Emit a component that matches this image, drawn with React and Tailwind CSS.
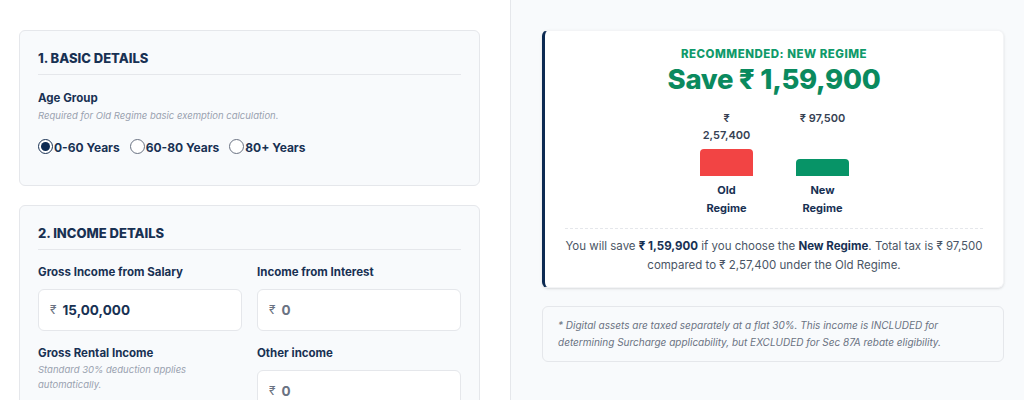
import React from 'react';

const navy = 'text-[#183153]';

function Radio({ label, checked }) {
    return (
        <label className="flex items-center gap-[1px]">
            <span className={`w-[15px] h-[15px] rounded-full border flex items-center justify-center bg-white ${checked ? 'border-[#183153] border-[1.5px]' : 'border-gray-500'}`}>
                {checked && <span className="w-[9px] h-[9px] rounded-full bg-[#0c2a52]" />}
            </span>
            <span className={`text-[12px] font-bold ${navy} mt-[3px]`}>{label}</span>
        </label>
    );
}

function Field({ label, help, value, muted }) {
    return (
        <div className="flex flex-col">
            <div className={`text-[11.5px] font-bold ${navy} leading-[16px]`}>{label}</div>
            {help && <div className="text-[9.5px] italic text-gray-400 leading-[15px] mt-[1px] pr-[40px]">{help}</div>}
            <div className="mt-[9px] h-[42px] bg-white border border-gray-200 rounded-[6px] flex items-center px-[11px] gap-[6px]">
                <span className="text-[12px] text-gray-500">₹</span>
                <span className={`text-[13.5px] font-bold ${muted ? 'text-gray-500' : navy}`}>{value}</span>
            </div>
        </div>
    );
}

function Bar({ amount, height, color, name }) {
    return (
        <div className="w-[53px] flex flex-col items-center">
            <div className="h-[66px] w-full flex flex-col justify-between items-center">
                <div className="text-[11px] font-semibold text-gray-700 text-center leading-[17px]">{amount}</div>
                <div className={`w-full rounded-t-[4px] ${color}`} style={{ height }} />
            </div>
            <div className={`text-[11px] font-bold ${navy} text-center leading-[18px] mt-[5px]`}>{name}</div>
        </div>
    );
}

export default function App() {
    return (
        <div className="flex w-[1024px] h-[400px] overflow-hidden" style={{ fontFamily: 'Inter, "Noto Sans", sans-serif' }}>
            <div className="w-[511px] shrink-0 bg-white border-r border-gray-200 pl-[19px] pt-[30px]">
                <div className="w-[461px] bg-[#f8fafc] border border-gray-200 rounded-[6px] px-[18px] pt-[17px] pb-[28px]">
                    <h2 className={`text-[13px] font-extrabold ${navy} leading-[20px]`}>1. BASIC DETAILS</h2>
                    <div className="h-px bg-gray-200 mt-[6px]" />
                    <div className={`text-[11.5px] font-bold ${navy} mt-[15px] leading-[16px]`}>Age Group</div>
                    <div className="text-[9.5px] italic text-gray-400 leading-[15px] mt-[2px]">Required for Old Regime basic exemption calculation.</div>
                    <div className="flex items-center gap-[10px] mt-[13px]">
                        <Radio label="0-60 Years" checked />
                        <Radio label="60-80 Years" />
                        <Radio label="80+ Years" />
                    </div>
                </div>

                <div className="w-[461px] mt-[19px] bg-[#f8fafc] border border-gray-200 rounded-[6px] px-[18px] pt-[17px] pb-[24px]">
                    <h2 className={`text-[13px] font-extrabold ${navy} leading-[20px]`}>2. INCOME DETAILS</h2>
                    <div className="h-px bg-gray-200 mt-[6px]" />
                    <div className="grid grid-cols-2 gap-x-[15px] gap-y-[14px] mt-[14px]">
                        <Field label="Gross Income from Salary" value="15,00,000" />
                        <Field label="Income from Interest" value="0" muted />
                        <Field label="Gross Rental Income" help="Standard 30% deduction applies automatically." value="0" muted />
                        <Field label="Other income" value="0" muted />
                    </div>
                </div>
            </div>

            <div className="flex-1 bg-[#f8fafc] pl-[31px] pr-[20px] pt-[30px]">
                <div className="bg-white rounded-[6px] border border-gray-100 border-l-[3px] border-l-[#0c2a52] shadow-sm pt-[15px] pb-[12px] px-[20px]">
                    <div className="text-center text-[11.5px] font-extrabold text-[#0f9a6a] tracking-[0.5px] leading-[16px]">RECOMMENDED: NEW REGIME</div>
                    <div className="text-center text-[27.5px] font-extrabold text-[#0a8a5e] leading-[34px] tracking-[-0.3px]">Save ₹ 1,59,900</div>
                    <div className="flex justify-center items-start gap-[43px] mt-[14px] pl-[1px]">
                        <Bar amount="₹ 2,57,400" height={27} color="bg-[#f24444]" name={<>Old<br />Regime</>} />
                        <Bar amount="₹ 97,500" height={17} color="bg-[#079467]" name={<>New<br />Regime</>} />
                    </div>
                    <div className="border-t border-dashed border-gray-200 mt-[11px] mb-[8px]" />
                    <p className="text-center text-[11.5px] text-gray-600 leading-[19px]">
                        You will save <b className={navy}>₹ 1,59,900</b> if you choose the <b className={navy}>New Regime</b>. Total tax is ₹ 97,500 compared to ₹ 2,57,400 under the Old Regime.
                    </p>
                </div>

                <div className="mt-[18px] bg-[#f8fafc] border border-gray-200 rounded-[6px] px-[15px] py-[10px]">
                    <p className="text-[10px] italic text-gray-500 leading-[17px]">
                        * Digital assets are taxed separately at a flat 30%. This income is INCLUDED for determining Surcharge applicability, but EXCLUDED for Sec 87A rebate eligibility.
                    </p>
                </div>
            </div>
        </div>
    );
}
